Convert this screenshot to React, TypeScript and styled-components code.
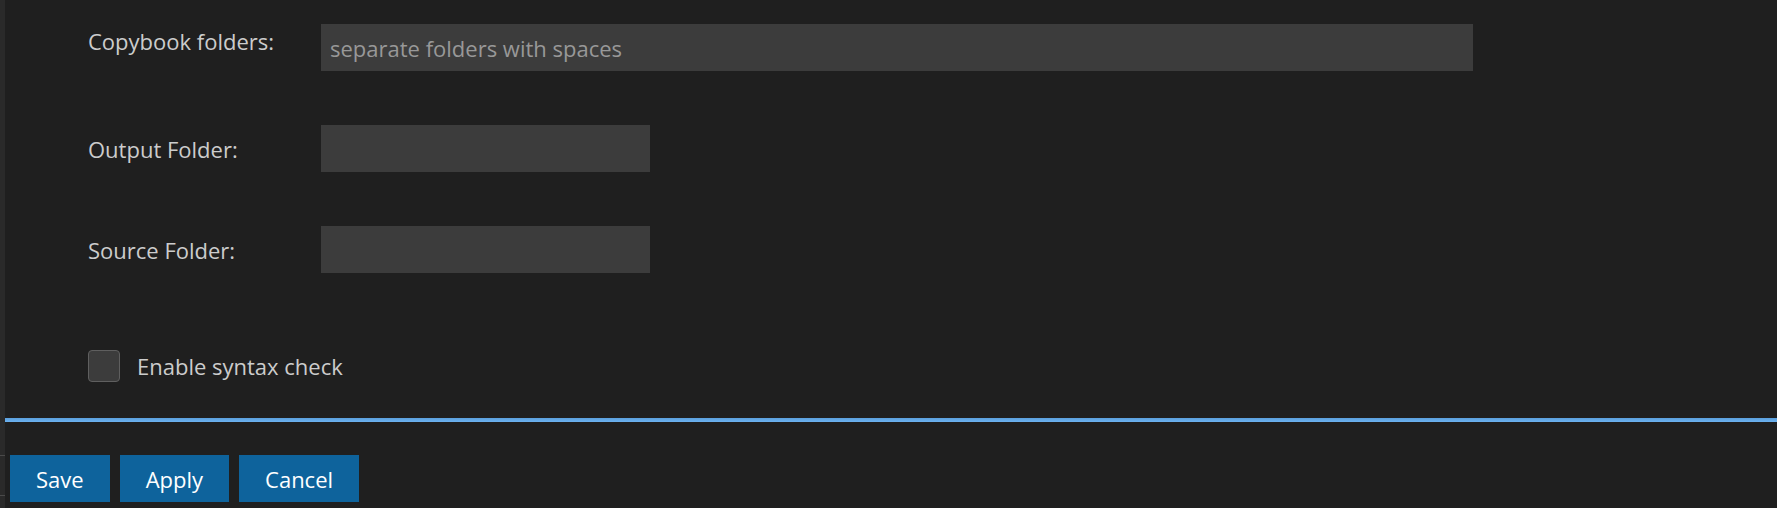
import React from "react";
import styled, { createGlobalStyle } from "styled-components";

const Global = createGlobalStyle`
  html, body { margin: 0; padding: 0; background: #1f1f1f; }
  body { font-family: "Open Sans", "Noto Sans", sans-serif; }
  * { box-sizing: border-box; }
`;

const Page = styled.div`
  display: flex;
  width: 1777px;
  height: 508px;
  background: #1f1f1f;
  overflow: hidden;
`;

const Sash = styled.div`
  width: 5px;
  flex: none;
  background: #2a2a2a;
  display: flex;
  flex-direction: column;
  justify-content: flex-end;
  padding-bottom: 12px;
  gap: 39px;
`;

const Tick = styled.div`
  height: 1px;
  background: #4a4a4a;
`;

const Main = styled.div`
  flex: 1;
  display: flex;
  flex-direction: column;
`;

const Form = styled.div`
  display: flex;
  flex-direction: column;
  padding: 24px 0 0 83px;
  gap: 54px;
`;

const Row = styled.div<{ $top?: boolean }>`
  display: grid;
  grid-template-columns: 233px auto;
  align-items: ${(p) => (p.$top ? "start" : "center")};
`;

const Label = styled.label<{ $offset?: number }>`
  color: #cccccc;
  font-size: 22px;
  line-height: 30px;
  padding-top: ${(p) => p.$offset ?? 0}px;
`;

const Input = styled.input<{ $w: number }>`
  width: ${(p) => p.$w}px;
  height: 47px;
  background: #3c3c3c;
  border: none;
  outline: none;
  color: #cccccc;
  font-family: inherit;
  font-size: 22px;
  padding: 0 9px;
  &::placeholder { color: #989898; }
`;

const CheckRow = styled.label`
  display: flex;
  align-items: center;
  gap: 17px;
  margin: 77px 0 0 83px;
  color: #cccccc;
  font-size: 22px;
  line-height: 32px;
`;

const Box = styled.span`
  width: 32px;
  height: 32px;
  border-radius: 4px;
  background: #3c3c3c;
  border: 1px solid #5f5f5f;
`;

const Divider = styled.div`
  margin-top: 36px;
  height: 4px;
  background: linear-gradient(#5a9fdc, #6cb2f0);
`;

const Buttons = styled.div`
  display: flex;
  gap: 10px;
  padding: 33px 0 0 5px;
`;

const Button = styled.button`
  height: 47px;
  padding: 0 26px;
  background: #0e639c;
  color: #ffffff;
  border: none;
  font-family: inherit;
  font-size: 22px;
`;

export default function App() {
  return (
    <Page>
      <Global />
      <Sash>
        <Tick />
        <Tick />
      </Sash>
      <Main>
        <Form>
          <Row $top>
            <Label $offset={2}>Copybook folders:</Label>
            <Input $w={1152} placeholder="separate folders with spaces" />
          </Row>
          <Row>
            <Label>Output Folder:</Label>
            <Input $w={329} />
          </Row>
          <Row>
            <Label>Source Folder:</Label>
            <Input $w={329} />
          </Row>
        </Form>
        <CheckRow>
          <Box />
          Enable syntax check
        </CheckRow>
        <Divider />
        <Buttons>
          <Button>Save</Button>
          <Button>Apply</Button>
          <Button>Cancel</Button>
        </Buttons>
      </Main>
    </Page>
  );
}
